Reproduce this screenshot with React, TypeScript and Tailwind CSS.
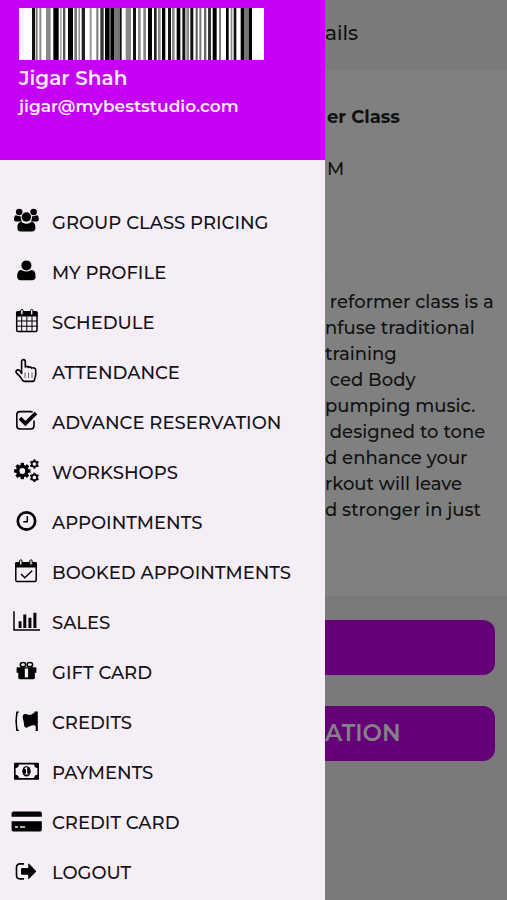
import type { ReactNode } from 'react'

// [x, width, shade] of each barcode stripe, on a 735 unit wide strip
const bars: [number, number, string][] = [
  [39, 9, '#111'], [50, 6, '#777'], [61, 6, '#888'], [81, 14, '#888'], [103, 16, '#000'],
  [123, 5, '#aaa'], [132, 7, '#555'], [147, 15, '#000'], [166, 8, '#777'], [178, 5, '#999'],
  [188, 10, '#222'], [212, 6, '#999'], [232, 6, '#777'], [244, 10, '#333'], [258, 14, '#000'],
  [272, 3, '#555'], [275, 10, '#000'], [285, 17, '#777'], [302, 6, '#111'], [320, 16, '#888'],
  [342, 9, '#111'], [357, 8, '#888'], [373, 8, '#888'], [387, 12, '#000'], [405, 8, '#222'],
  [417, 8, '#888'], [429, 10, '#000'], [447, 9, '#111'], [459, 8, '#888'], [473, 11, '#000'],
  [490, 9, '#111'], [502, 8, '#888'], [514, 9, '#111'], [530, 6, '#555'], [541, 6, '#777'],
  [555, 7, '#666'], [567, 9, '#333'], [581, 12, '#000'], [600, 6, '#777'], [621, 8, '#000'],
  [635, 5, '#888'], [644, 8, '#111'], [665, 10, '#000'], [675, 14, '#777'], [689, 10, '#000'],
]

function Barcode() {
  return (
    <svg
      viewBox="0 0 735 157"
      preserveAspectRatio="none"
      role="img"
      aria-label="Member barcode"
      className="h-[52px] w-[245px] max-w-full"
    >
      <rect width="735" height="157" fill="#fff" />
      {bars.map(([x, width, shade]) => (
        <rect key={x} x={x} width={width} height="157" fill={shade} />
      ))}
    </svg>
  )
}

const line = { fill: 'none', stroke: '#000' }

interface GearProps {
  cx: number
  cy: number
  r: number
  thickness: number
  tooth: number
  teeth: number
}

function Gear({ cx, cy, r, thickness, tooth, teeth }: GearProps) {
  const angles = Array.from({ length: teeth }, (_, i) => (i * 360) / teeth)
  const outer = r + thickness / 2
  return (
    <g>
      <circle cx={cx} cy={cy} r={r} strokeWidth={thickness} {...line} />
      {angles.map((angle) => (
        <rect
          key={angle}
          x={cx - tooth / 2}
          y={cy - outer - tooth * 0.55}
          width={tooth}
          height={tooth}
          transform={`rotate(${angle} ${cx} ${cy})`}
        />
      ))}
    </g>
  )
}

const icons: Record<string, ReactNode> = {
  group: (
    <>
      <circle cx="9.2" cy="5" r="3.3" />
      <circle cx="23.6" cy="5" r="3.3" />
      <path d="M4 12.6c0-2.6.7-4.4 2-4.4.9 0 1.7 1 3.4 1 .5 0 .9-.1 1.3-.2-.1 2.2.4 4 1.3 5.6H6.200c-1.500 0-2.200-.8-2.200-2z" />
      <path d="M28.8 12.6c0-2.6-.7-4.4-2-4.4-.9 0-1.7 1-3.4 1-.5 0-.9-.1-1.3-.2.1 2.2-.4 4-1.3 5.6h5.8c1.5 0 2.2-.8 2.2-2z" />
      <circle cx="16.4" cy="10" r="5.3" fill="#f5eef6" />
      <circle cx="16.4" cy="10" r="4.7" />
      <path d="M7.400 21c0-3.400.9-6 3.800-6 .8 0 2.300 1.700 5.200 1.700s4.400-1.700 5.200-1.700c2.900 0 3.800 2.600 3.800 6 0 2.300-1.400 3.600-3.600 3.600H11c-2.200 0-3.600-1.300-3.600-3.600z" />
    </>
  ),
  person: (
    <>
      <circle cx="16.4" cy="8.4" r="5" />
      <path d="M7.2 19.700c0-3.600 1-6.600 4-6.600.9 0 2.300 1.500 5.200 1.500s4.300-1.500 5.200-1.500c3 0 4 3 4 6.600 0 2.200-1.400 3.600-3.400 3.600H10.600c-2 0-3.400-1.400-3.400-3.600z" />
    </>
  ),
  calendar: (
    <>
      <path d="M6 5.800Q6 4 7.800 4h18.100q1.800 0 1.800 1.800V9.500H6z" />
      <rect x="6.7" y="5" width="20.3" height="19.500" rx="1.3" strokeWidth="1.5" {...line} />
      <path d="M11.7 9.500v15M16.8 9.500v15M22 9.500v15M6.500 14h21M6.500 19.200h21" strokeWidth="1" {...line} />
      <rect x="10.7" y="2.400" width="2.4" height="5.6" rx="1.2" fill="#f5eef6" stroke="#000" />
      <rect x="20.5" y="2.400" width="2.4" height="5.6" rx="1.2" fill="#f5eef6" stroke="#000" />
    </>
  ),
  hand: (
    <>
      <path
        d="M11.6 16.500V4.700c0-1.300.7-2.100 1.800-2.100s1.900.8 1.900 2.100v5.300c.6-.9 2.700-.9 3.200.4.700-.8 2.600-.6 3.100.7 1.600-.8 4.100-.2 4.100 2v4.600c0 1.600-.9 2.900-1.100 4.600-.1 1.300-.8 2.100-2 2.100h-7.800c-1.300 0-2-.5-2.600-1.500-1-1.800-1.600-2.900-3.200-4.500-1.400-1.300-2.800-2.200-3-3.400-.2-1.400 1-2.300 2.400-2.100 1.500.2 2.300 1.600 3.200 3.600z"
        strokeWidth="1.6"
        strokeLinejoin="round"
        {...line}
      />
      <path d="M15 15.500v5.500M18.500 15.500v5.500M22 15.500v5.500" strokeWidth=".6" {...line} />
    </>
  ),
  check: (
    <>
      <path d="M24 13.500v5.300a3.200 3.200 0 0 1-3.200 3.200H10a3.200 3.200 0 0 1-3.200-3.200V7.800A3.200 3.200 0 0 1 10 4.600h10.800q1 0 1.800.4" strokeWidth="1.6" {...line} />
      <path d="m10 11.200 5.400 5.400L26 6" strokeWidth="3.8" {...line} />
    </>
  ),
  gears: (
    <>
      <Gear cx={12.3} cy={14} r={4.6} thickness={3.4} tooth={3.4} teeth={8} />
      <Gear cx={24.4} cy={7} r={2.7} thickness={1.7} tooth={2} teeth={6} />
      <Gear cx={24.4} cy={20.4} r={2.7} thickness={1.7} tooth={2} teeth={6} />
    </>
  ),
  clock: (
    <>
      <circle cx="16.5" cy="14" r="8.7" strokeWidth="2.7" {...line} />
      <path d="M17.3 9v5.700h-4" strokeWidth="1.5" {...line} />
    </>
  ),
  booked: (
    <>
      <rect x="5.8" y="5.800" width="20.4" height="18.800" rx="1.3" strokeWidth="1.5" {...line} />
      <path d="M5 7Q5 5 7 5h18q2 0 2 2v3.500H5z" />
      <rect x="9.6" y="2.800" width="2.4" height="5.4" rx="1.2" fill="#f5eef6" stroke="#000" />
      <rect x="19.8" y="2.800" width="2.4" height="5.4" rx="1.2" fill="#f5eef6" stroke="#000" />
      <path d="m11 17 3.800 3.800 7.400-7" strokeWidth="1.5" {...line} />
    </>
  ),
  chart: (
    <>
      <path d="M4 4.200v18.700h26" strokeWidth="1.5" {...line} />
      <path d="M8.600 14.200h2.900v6.700H8.600zM13.300 7.500h3v13.400h-3zM18.400 10.800h3v10.100h-3zM23.400 5.800h3v15.100h-3z" />
    </>
  ),
  gift: (
    <>
      <ellipse cx="13" cy="7.700" rx="2.7" ry="2.1" strokeWidth="1.5" {...line} />
      <ellipse cx="19.9" cy="7.700" rx="2.7" ry="2.1" strokeWidth="1.5" {...line} />
      <path d="M7.400 10.300h18q1 0 1 1v4.500h-1.500v5q0 1.400-1.400 1.400H9.700q-1.400 0-1.400-1.400v-5H6.600v-4.500q0-1 .8-1z" />
      <path d="M14.800 11.500h3.300v8.900h-3.300z" fill="#f5eef6" />
    </>
  ),
  credits: (
    <>
      <path d="M6.200 4.400h2.800v1.200H8c-1.300 4.500-1.300 13 0 17.300h1v1.200H6.200q-1.800-9.800 0-19.700z" />
      <path d="M13 8.300c1-1.700 3-1.500 4.600-.8 2 .8 4.200.3 5.400-1l1.600-1V4.400h3.200v19.700h-2.300v-1.200c.7-1.400.4-3.600-.6-4.300-1.300-.8-3.200-.3-4.700.3-1.600.6-2.800 2-4.300 1.800-1.800-.2-1.900-2.500-2-4.600-.2-2.700-2-5.200-.9-7.800z" />
    </>
  ),
  money: (
    <>
      <rect x="4" y="5.700" width="25" height="17" rx=".8" />
      <path d="M8.900 7.400h15.200a3.600 3.600 0 0 0 3.300 3.500v6.800a3.600 3.600 0 0 0-3.300 3.400H8.900a3.600 3.600 0 0 0-3.300-3.400v-6.800a3.600 3.600 0 0 0 3.300-3.500z" fill="#f5eef6" />
      <ellipse cx="16.5" cy="14.2" rx="4.2" ry="5.3" />
      <path d="m14.800 11.900 1.800-1.300v6M14.700 17h3.700" fill="none" stroke="#f5eef6" strokeWidth="1.2" />
    </>
  ),
  card: (
    <>
      <path d="M3.300 4.500h26.800q1.700 0 1.700 1.700v3.600H1.600V6.200q0-1.700 1.700-1.700zM1.600 14.300h30.200v8.500q0 1.700-1.700 1.700H3.300q-1.700 0-1.700-1.700z" />
      <path d="M5 20h3M10 20h5" stroke="#f5eef6" strokeWidth="1.4" />
    </>
  ),
  logout: (
    <>
      <path d="M14 6.900H9.800a3.300 3.300 0 0 0-3.300 3.300v8.400a3.300 3.300 0 0 0 3.300 3.300H14" strokeWidth="1.6" {...line} />
      <path d="M11 11.900q0-1 1-1h6.200V7.100q0-1 .9-.3l6.700 7q.5.600 0 1.200l-6.700 6.800q-.9.700-.9-.3v-3.700H12q-1 0-1-1z" />
    </>
  ),
}

const items = [
  { icon: 'group', label: 'GROUP CLASS PRICING' },
  { icon: 'person', label: 'MY PROFILE' },
  { icon: 'calendar', label: 'SCHEDULE' },
  { icon: 'hand', label: 'ATTENDANCE' },
  { icon: 'check', label: 'ADVANCE RESERVATION' },
  { icon: 'gears', label: 'WORKSHOPS' },
  { icon: 'clock', label: 'APPOINTMENTS' },
  { icon: 'booked', label: 'BOOKED APPOINTMENTS' },
  { icon: 'chart', label: 'SALES' },
  { icon: 'gift', label: 'GIFT CARD' },
  { icon: 'credits', label: 'CREDITS' },
  { icon: 'money', label: 'PAYMENTS' },
  { icon: 'card', label: 'CREDIT CARD' },
  { icon: 'logout', label: 'LOGOUT' },
]

const description = [
  ' reformer class is a',
  'nfuse traditional',
  'training',
  ' ced Body',
  'pumping music.',
  ' designed to tone',
  'd enhance your',
  'rkout will leave',
  'd stronger in just',
]

function Drawer() {
  return (
    <aside className="w-[325px] max-w-[80%] shrink-0 bg-[#f5eef6]">
      <header className="bg-[#c400f5] px-[19px] pt-2 pb-10 text-[#fbe9ff]">
        <Barcode />
        <p className="mt-1 text-[20px] leading-7 font-semibold">Jigar Shah</p>
        <p className="text-[17px] leading-7 font-semibold">jigar@mybeststudio.com</p>
      </header>
      <nav className="pt-[38px]">
        <ul>
          {items.map(({ icon, label }) => (
            <li key={label}>
              <a
                href="#"
                className="flex h-[50px] items-center gap-[10px] pl-[10px] text-[18px] font-medium whitespace-nowrap text-[#151216]"
              >
                <svg viewBox="0 0 32 32" aria-hidden="true" className="size-8 shrink-0">
                  {icons[icon]}
                </svg>
                {label}
              </a>
            </li>
          ))}
        </ul>
      </nav>
    </aside>
  )
}

function ClassDetails() {
  return (
    <main className="flex min-w-0 flex-1 flex-col bg-[#808080] whitespace-pre text-[#111]">
      <header className="flex h-[70px] items-center bg-[#7a7a7a] pb-1">
        <h1 className="text-[20px] font-medium">ails</h1>
      </header>
      <section className="border-b border-[#7b7b7b] pt-[33px] pb-[93px] pl-0.5">
        <h2 className="text-[18px] leading-7 font-bold">er Class</h2>
        <p className="mt-6 text-[18px] leading-7 font-medium">M</p>
      </section>
      <section className="pt-3 pb-[73px]">
        {description.map((text) => (
          <p key={text} className="text-[18px] leading-[26px] font-medium">{text}</p>
        ))}
      </section>
      <div className="flex flex-1 flex-col gap-[31px] bg-[#7b797b] pt-6 pr-3">
        <button type="button" aria-label="Reserve" className="h-[55px] rounded-r-xl bg-[#640078]" />
        <button type="button" className="h-[55px] rounded-r-xl bg-[#640078] text-left text-[23px] font-semibold text-[#858085]">
          ATION
        </button>
      </div>
    </main>
  )
}

export default function App() {
  return (
    <div className="flex min-h-screen font-[Montserrat,Inter,sans-serif]">
      <Drawer />
      <ClassDetails />
    </div>
  )
}
